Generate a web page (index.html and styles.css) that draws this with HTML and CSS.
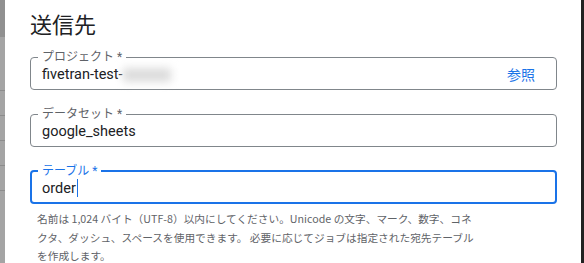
FILE: index.html
```html
<!DOCTYPE html>
<html lang="ja">
<head>
    <meta charset="UTF-8" />
    <title>送信先</title>
    <link rel="stylesheet" href="styles.css">
</head>
<body>
<div class="backdrop">
    <div class="backdrop-top"></div>
    <div class="backdrop-row"></div>
    <div class="backdrop-row"></div>
    <div class="backdrop-row"></div>
    <div class="backdrop-row"></div>
    <div class="backdrop-row"></div>
</div>

<div class="panel">
    <h2 class="title">送信先</h2>

    <fieldset class="field">
        <legend>プロジェクト *</legend>
        <div class="field-row">
            <span class="value">fivetran-test-<span class="masked"></span></span>
            <span class="browse">参照</span>
        </div>
    </fieldset>

    <fieldset class="field">
        <legend>データセット *</legend>
        <div class="field-row">
            <span class="value">google_sheets</span>
        </div>
    </fieldset>

    <fieldset class="field focused">
        <legend>テーブル *</legend>
        <div class="field-row">
            <span class="value">order<span class="caret"></span></span>
        </div>
    </fieldset>

    <p class="hint">名前は 1,024 バイト（UTF-8）以内にしてください。Unicode の文字、マーク、数字、コネ<br>クタ、ダッシュ、スペースを使用できます。 必要に応じてジョブは指定された宛先テーブル<br>を作成します。</p>
</div>

<div class="edge"></div>
</body>
</html>
```

FILE: styles.css
```css
body {
    margin: 0;
    height: 263px;
    overflow: hidden;
    display: flex;
    font-family: Roboto, "Noto Sans CJK JP", sans-serif;
    color: #202124;
    background: #fff;
}
.backdrop {
    width: 5px;
    flex-shrink: 0;
    background: #a4a4a4;
    display: flex;
    flex-direction: column;
}
.backdrop-top {
    height: 37px;
    background: #909090;
    margin-bottom: 53px;
}
.backdrop-row {
    border-top: 1px solid #8c8c8c;
    height: 24px;
}
.backdrop-row:first-of-type {
    height: 67px;
}
.panel {
    flex: 1;
    padding: 0 24px 0 25px;
}
.edge {
    width: 3px;
    flex-shrink: 0;
    background: #222;
}
.title {
    margin: 11px 0 9px;
    font-size: 22px;
    font-weight: 400;
    line-height: 30px;
}
.field {
    margin: 0 0 17px;
    padding: 0 11px 5px;
    border: 1px solid #80868b;
    border-radius: 4px;
}
.field legend {
    margin-left: -4px;
    padding: 0 4px;
    font-size: 12px;
    line-height: 14px;
    color: #5f6368;
}
.field-row {
    display: flex;
    align-items: center;
    height: 20px;
}
.value {
    flex: 1;
    font-size: 14.5px;
    color: #202124;
}
.masked {
    display: inline-block;
    width: 48px;
    height: 14px;
    vertical-align: -3px;
    background: #dcdcdc;
    filter: blur(4px);
}
.browse {
    color: #1a73e8;
    font-size: 14px;
    margin-right: 10px;
}
.field.focused {
    border: 2px solid #1a73e8;
    padding: 0 10px 4px;
}
.field.focused legend {
    color: #1a73e8;
}
.caret {
    display: inline-block;
    width: 1px;
    height: 18px;
    margin-left: 1px;
    vertical-align: -4px;
    background: #1a73e8;
}
.hint {
    margin: -11px 0 0 7px;
    font-family: "Noto Sans CJK JP", sans-serif;
    font-size: 10.7px;
    line-height: 18.5px;
    color: #5f6368;
}
```
